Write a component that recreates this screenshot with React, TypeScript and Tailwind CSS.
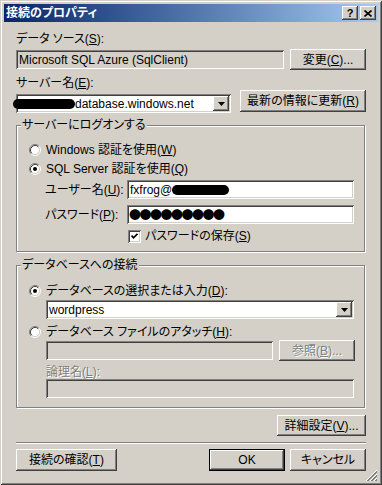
import React from "react";

const raised =
  "bg-[#d4d0c8] shadow-[inset_-1px_-1px_#404040,inset_1px_1px_#ffffff,inset_-2px_-2px_#808080,inset_2px_2px_#d4d0c8]";
const sunken =
  "shadow-[inset_1px_1px_#808080,inset_-1px_-1px_#ffffff,inset_2px_2px_#404040,inset_-2px_-2px_#d4d0c8]";
const dim = "text-[#808080] [text-shadow:1px_1px_#ffffff]";

const Button: React.FC<{
  className?: string;
  disabled?: boolean;
  children: React.ReactNode;
}> = ({ className = "", disabled, children }) => (
  <div
    className={`${raised} flex items-center justify-center shrink-0 ${
      disabled ? dim : "text-black"
    } ${className}`}
  >
    {children}
  </div>
);

const Radio: React.FC<{ on?: boolean }> = ({ on }) => (
  <svg width="12" height="12" viewBox="0 0 12 12" className="shrink-0">
    <circle cx="6" cy="6" r="4.5" fill="#ffffff" />
    <path d="M2.11 9.89A5.5 5.5 0 0 1 9.89 2.11" stroke="#808080" fill="none" />
    <path d="M9.89 2.11A5.5 5.5 0 0 1 2.11 9.89" stroke="#ffffff" fill="none" />
    <path d="M2.82 9.18A4.5 4.5 0 0 1 9.18 2.82" stroke="#404040" fill="none" />
    <path d="M9.18 2.82A4.5 4.5 0 0 1 2.82 9.18" stroke="#d4d0c8" fill="none" />
    {on && <circle cx="6" cy="6" r="2" fill="#000000" />}
  </svg>
);

const DropArrow = () => (
  <div className={`${raised} w-[16px] h-[15px] flex items-center justify-center shrink-0`}>
    <svg width="7" height="4" viewBox="0 0 7 4">
      <path d="M0 0H7L3.5 4Z" fill="#000000" />
    </svg>
  </div>
);

const Blob: React.FC<{ className: string }> = ({ className }) => (
  <span className={`inline-block bg-black rounded-full shrink-0 ${className}`} />
);

const Group: React.FC<{ title: string; className: string; children: React.ReactNode }> = ({
  title,
  className,
  children,
}) => (
  <div
    className={`relative w-[349px] border border-[#808080] shadow-[inset_1px_1px_#ffffff,1px_1px_#ffffff] flex flex-col pl-[12px] ${className}`}
  >
    <span className="absolute left-[4px] top-[-8px] bg-[#d4d0c8] px-[1px] leading-[14px]">
      {title}
    </span>
    {children}
  </div>
);

export default function App() {
  return (
    <div className="relative w-[382px] h-[485px] bg-[#d4d0c8] p-[4px] flex flex-col text-[12px] leading-[14px] text-black font-['Liberation_Sans','Noto_Sans_CJK_JP',sans-serif] [font-feature-settings:'palt'] shadow-[inset_1px_1px_#d4d0c8,inset_-1px_-1px_#404040,inset_2px_2px_#ffffff,inset_-2px_-2px_#808080]">
      {/* title bar */}
      <div className="h-[18px] flex items-center bg-linear-to-r from-[#0a246a] to-[#a6caf0] pl-[2px] pr-[2px]">
        <span className="text-white font-bold text-[12px]">接続のプロパティ</span>
        <div className="ml-auto flex gap-[2px]">
          <div className={`${raised} w-[16px] h-[14px] flex items-center justify-center text-[11px] font-bold leading-none`}>
            ?
          </div>
          <div className={`${raised} w-[16px] h-[14px] flex items-center justify-center`}>
            <svg width="8" height="7" viewBox="0 0 8 7">
              <path d="M0.5 0.5L7.5 6.5M7.5 0.5L0.5 6.5" stroke="#000000" strokeWidth="1.6" />
            </svg>
          </div>
        </div>
      </div>

      <div className="flex flex-col px-[12px]">
        <div className="mt-[10px] h-[14px]">
          データ ソース(<u>S</u>):
        </div>
        <div className="mt-[3px] h-[21px] flex">
          <div className={`${sunken} mt-[1px] w-[268px] h-[19px] flex items-center px-[3px]`}>
            Microsoft SQL Azure (SqlClient)
          </div>
          <Button className="ml-auto w-[76px] h-[21px]">
            変更(<u>C</u>)...
          </Button>
        </div>

        <div className="mt-[6px] h-[14px]">
          サーバー名(<u>E</u>):
        </div>
        <div className="h-[22px] flex">
          <div className={`${sunken} bg-white mt-[4px] w-[215px] h-[19px] flex items-center pl-[3px] pr-[2px]`}>
            <Blob className="ml-[-6px] w-[62px] h-[10px]" />
            <span>database.windows.net</span>
            <div className="ml-auto">
              <DropArrow />
            </div>
          </div>
          <Button className="ml-auto w-[126px] h-[22px]">
            最新の情報に更新(<u>R</u>)
          </Button>
        </div>

        <Group title="サーバーにログオンする" className="mt-[13px] h-[127px]">
          <div className="mt-[17px] h-[14px] flex items-center gap-[5px]">
            <Radio />
            <span>
              Windows 認証を使用(<u>W</u>)
            </span>
          </div>
          <div className="mt-[5px] h-[14px] flex items-center gap-[5px]">
            <Radio on />
            <span>
              SQL Server 認証を使用(<u>Q</u>)
            </span>
          </div>
          <div className="mt-[4px] h-[19px] flex items-center pl-[16px]">
            <span className="w-[82px]">
              ユーザー名(<u>U</u>):
            </span>
            <div className={`${sunken} bg-white w-[227px] h-[19px] flex items-center px-[3px]`}>
              <span>fxfrog@</span>
              <Blob className="w-[57px] h-[10px]" />
            </div>
          </div>
          <div className="mt-[6px] h-[19px] flex items-center pl-[16px]">
            <span className="w-[82px]">
              パスワード(<u>P</u>):
            </span>
            <div className={`${sunken} bg-white w-[227px] h-[19px] flex items-center px-[2px] overflow-hidden`}>
              <span className="font-['Noto_Sans_CJK_JP',sans-serif] text-[12px] tracking-[-1.5px]">
                ●●●●●●●●●
              </span>
            </div>
          </div>
          <div className="mt-[5px] h-[14px] flex items-center gap-[4px] pl-[99px]">
            <div className={`${sunken} bg-white w-[13px] h-[13px] flex items-center justify-center shrink-0`}>
              <svg width="7" height="7" viewBox="0 0 7 7">
                <path d="M0.5 2.5L2.5 4.8L6.5 0.8" stroke="#000000" strokeWidth="1.8" fill="none" />
              </svg>
            </div>
            <span>
              パスワードの保存(<u>S</u>)
            </span>
          </div>
        </Group>

        <Group title="データベースへの接続" className="mt-[13px] h-[143px]">
          <div className="mt-[18px] h-[14px] flex items-center gap-[5px]">
            <Radio on />
            <span>
              データベースの選択または入力(<u>D</u>):
            </span>
          </div>
          <div className={`${sunken} bg-white mt-[2px] ml-[17px] w-[308px] h-[19px] flex items-center pl-[3px] pr-[2px]`}>
            <span>wordpress</span>
            <div className="ml-auto">
              <DropArrow />
            </div>
          </div>
          <div className="mt-[6px] h-[14px] flex items-center gap-[5px]">
            <Radio />
            <span>
              データベース ファイルのアタッチ(<u>H</u>):
            </span>
          </div>
          <div className="mt-[1px] h-[21px] flex ml-[17px]">
            <div className={`${sunken} mt-[1px] w-[227px] h-[19px]`} />
            <Button disabled className="ml-[6px] w-[76px] h-[21px]">
              参照(<u>B</u>)...
            </Button>
          </div>
          <div className={`mt-[4px] ml-[17px] h-[14px] ${dim}`}>
            論理名(<u>L</u>):
          </div>
          <div className={`${sunken} ml-[17px] w-[308px] h-[19px]`} />
        </Group>

        <Button className="self-end mt-[7px] w-[89px] h-[21px]">
          詳細設定(<u>V</u>)...
        </Button>

        <div className="mt-[6px] h-[2px] border-t border-[#808080] border-b border-b-[#ffffff]" />

        <div className="mt-[5px] h-[22px] flex">
          <Button className="w-[101px] h-[22px]">
            接続の確認(<u>T</u>)
          </Button>
          <div className="ml-auto w-[76px] h-[22px] border border-black">
            <Button className="w-full h-full">OK</Button>
          </div>
          <Button className="ml-[5px] w-[76px] h-[22px]">キャンセル</Button>
        </div>
      </div>

      {/* size grip */}
      <svg width="12" height="12" viewBox="0 0 12 12" className="absolute right-[4px] bottom-[3px]" shapeRendering="crispEdges">
        <path d="M11 0L0 11M11 4L4 11M11 8L8 11" stroke="#ffffff" />
        <path d="M11 1L1 11M11 2L2 11M11 5L5 11M11 6L6 11M11 9L9 11M11 10L10 11" stroke="#808080" />
      </svg>
    </div>
  );
}
